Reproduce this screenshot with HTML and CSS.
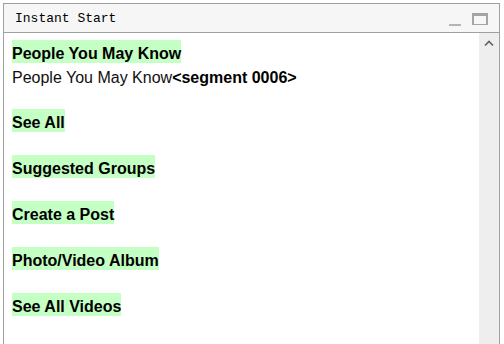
FILE: index.html
```html
<!DOCTYPE html>
<html lang="en">
<head>
    <meta charset="UTF-8">
    <meta name="viewport" content="width=device-width, initial-scale=1.0">
    <title>Instant Start</title>
    <link rel="stylesheet" href="styles.css">
</head>
<body>
    <div class="window">
        <!-- title bar -->
        <div class="titlebar">
            <span class="title">Instant Start</span>
            <span class="btn-min"></span>
            <span class="btn-max"></span>
        </div>

        <div class="frame">
            <div class="content">
                <div class="row"><span class="hl">People You May Know</span></div>
                <div class="row plain">People You May Know<b>&lt;segment 0006&gt;</b></div>
                <div class="gap"></div>
                <div class="row"><span class="hl">See All</span></div>
                <div class="gap"></div>
                <div class="row"><span class="hl">Suggested Groups</span></div>
                <div class="gap"></div>
                <div class="row"><span class="hl">Create a Post</span></div>
                <div class="gap"></div>
                <div class="row"><span class="hl">Photo/Video Album</span></div>
                <div class="gap"></div>
                <div class="row"><span class="hl">See All Videos</span></div>
            </div>

            <!-- scrollbar -->
            <div class="scrollbar">
                <svg class="arrow" width="10" height="6" viewBox="0 0 10 6">
                    <path d="M1 5.5 L5 1.5 L9 5.5" fill="none" stroke="#606060" stroke-width="1.6"/>
                </svg>
            </div>
        </div>
    </div>
</body>
</html>
```

FILE: styles.css
```css
html, body {
    margin: 0;
    padding: 0;
    background: #ffffff;
}

.window {
    margin: 3px 4px 0 3px;
    height: 341px;
    border: 1px solid #a0a0a0;
    border-bottom: none;
    box-sizing: border-box;
    display: flex;
    flex-direction: column;
}

.titlebar {
    height: 29px;
    background: #f6f6f6;
    border-bottom: 1px solid #a0a0a0;
    box-sizing: border-box;
    display: flex;
    align-items: center;
    padding-left: 11px;
}

.title {
    font-family: "Liberation Mono", monospace;
    font-size: 13px;
    color: #000000;
    flex: 1;
    padding-top: 1px;
}

.btn-min {
    width: 12px;
    height: 2px;
    background: #b4b4b4;
    margin-top: 13px;
}

.btn-max {
    width: 12px;
    height: 8px;
    border: 2px solid #a4a4a4;
    border-top-width: 3px;
    border-bottom-width: 1px;
    margin: 0 11px 0 11px;
    margin-top: 1px;
}

.frame {
    flex: 1;
    display: flex;
}

.content {
    flex: 1;
    padding: 7px 0 0 8px;
    font-family: "Liberation Sans", Arial, sans-serif;
    font-size: 16px;
    color: #000;
}

.row {
    height: 23px;
}

.gap {
    height: 23px;
}

.hl {
    display: inline-block;
    background: #c4ffc4;
    font-weight: bold;
    padding-top: 4px;
    line-height: 19px;
    height: 23px;
    box-sizing: border-box;
}

.plain {
    line-height: 20px;
    padding-top: 5px;
    height: 23px;
    box-sizing: border-box;
    color: #101010;
}

.plain b {
    color: #000;
}

.scrollbar {
    width: 20px;
    background: #eeeeee;
    display: flex;
    justify-content: center;
    align-items: flex-start;
}

.arrow {
    margin-top: 7px;
}
```
